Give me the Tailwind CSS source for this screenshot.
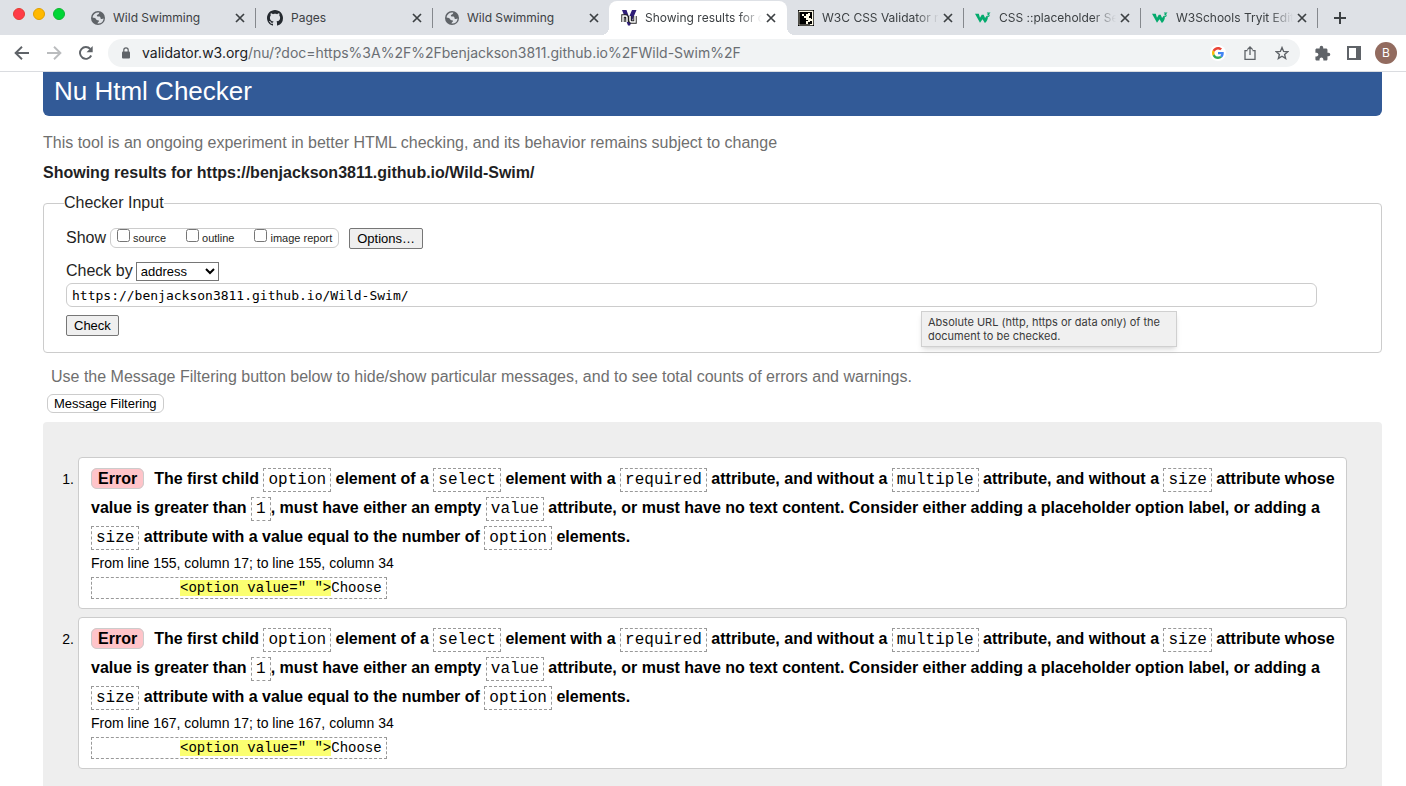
<!DOCTYPE html>
<html lang="en">
<head>
<meta charset="utf-8">
<meta name="viewport" content="width=device-width, initial-scale=1">
<title>Showing results for https://benjackson3811.github.io/Wild-Swim/</title>
<script src="https://cdn.jsdelivr.net/npm/@tailwindcss/browser@4"></script>
</head>
<body class="flex h-screen flex-col overflow-hidden bg-white font-['Liberation_Sans',Arial,sans-serif] text-base text-[#1f1f24]">

<svg class="hidden" aria-hidden="true">
  <symbol id="close" viewBox="0 0 10 10"><path d="M1 1l8 8M9 1L1 9" stroke="#3c4043" stroke-width="1.7" fill="none"/></symbol>
  <symbol id="globe" viewBox="0 0 14 14"><circle cx="7" cy="7" r="7" fill="#5f6368"/><path d="M8.3 1.6c-.4 1-.2 1.5-1.3 1.8-1.2.3-1.3 1-1 1.700.2.6 1.300.5 2 .5 1 0 1.500.6 1.500 1.500 0 .8.6 1 1.300.9.8-.1 1-.5 1.500-.5.300 0 .3.300.2.700A5.600 5.600 0 0 1 6.500 12.500c.1-.9.600-1.300 1.200-1.800.5-.6.2-1.400-.5-1.500-1-.1-1.700-.1-2.100-1C4.600 7.300 4 7 3 6.800c-.7-.1-1.200-.3-1.500-.6A5.600 5.600 0 0 1 8.300 1.600z" fill="#dee1e6"/></symbol>
  <symbol id="w3s" viewBox="0 0 17 12"><path d="M0 1.500h4l1.300 4.200L7.200 2.500h2l1.500 3.400 1.500-2 1.500 1.300c-.1 2.700-1.300 4.600-3.200 6.200L8 7.200 5.300 11z" fill="#04aa6d"/><path d="M12.700.8h2.600L14 2.300c1.300 0 1.500 2-.1 2.100-.7 0-1-.2-1.300-.6" stroke="#04aa6d" stroke-width="1.100" fill="none"/></symbol>
</svg>

<header class="shrink-0 font-[Inter,Roboto,sans-serif]">
  <div class="flex h-[35px] items-stretch bg-[#dee1e6]">
    <div class="flex w-[78px] shrink-0 gap-2 pl-[13px] pt-2">
      <span class="size-3 rounded-full border border-[#e33e32] bg-[#ff3b47]"></span>
      <span class="size-3 rounded-full border border-[#e0a000] bg-[#ffb900]"></span>
      <span class="size-3 rounded-full border border-[#10b531] bg-[#00d636]"></span>
    </div>
    <nav class="flex text-xs text-[#3c4043]" aria-label="Tabs">
      <div class="flex w-[177px] items-center pl-[13px] pr-1.5">
        <svg class="mr-2 size-3.5 shrink-0"><use href="#globe"/></svg>
        <a href="#" class="flex-1 overflow-hidden whitespace-nowrap">Wild Swimming</a>
        <button class="p-1" aria-label="Close tab"><svg class="size-2.5"><use href="#close"/></svg></button>
      </div>
      <div class="flex w-[177px] items-center pr-1.5">
        <span class="mr-[11px] h-5 w-px bg-[#85888d]"></span>
        <svg class="mr-2 size-4 shrink-0" viewBox="0 0 16 16"><path fill="#24292f" d="M8 0C3.580 0 0 3.580 0 8c0 3.540 2.290 6.530 5.470 7.590.4.070.55-.17.55-.38 0-.19-.01-.82-.01-1.490-2.010.37-2.530-.49-2.690-.94-.09-.23-.48-.94-.82-1.130-.28-.15-.68-.52-.01-.53.63-.01 1.080.58 1.230.82.72 1.210 1.870.87 2.330.66.07-.52.28-.87.51-1.070-1.780-.2-3.640-.89-3.640-3.950 0-.87.31-1.590.82-2.150-.08-.2-.36-1.020.08-2.120 0 0 .67-.21 2.200.82.64-.18 1.320-.27 2-.27s1.360.09 2 .27c1.530-1.040 2.200-.82 2.200-.82.44 1.100.16 1.920.08 2.120.51.56.82 1.270.82 2.150 0 3.070-1.870 3.750-3.650 3.950.29.25.54.73.54 1.480 0 1.070-.01 1.930-.01 2.200 0 .21.15.46.55.38A8.010 8.010 0 0 0 16 8c0-4.420-3.580-8-8-8z"/></svg>
        <a href="#" class="flex-1 overflow-hidden whitespace-nowrap">Pages</a>
        <button class="p-1" aria-label="Close tab"><svg class="size-2.5"><use href="#close"/></svg></button>
      </div>
      <div class="flex w-[177px] items-center pr-1.5">
        <span class="mr-3 h-5 w-px bg-[#85888d]"></span>
        <svg class="mr-2 size-3.5 shrink-0"><use href="#globe"/></svg>
        <a href="#" class="flex-1 overflow-hidden whitespace-nowrap">Wild Swimming</a>
        <button class="p-1" aria-label="Close tab"><svg class="size-2.5"><use href="#close"/></svg></button>
      </div>
      <div class="relative mt-px flex w-[178px] items-center rounded-t-lg bg-white pl-3 pr-[7px] before:absolute before:-left-2 before:bottom-0 before:size-2 before:bg-[radial-gradient(circle_at_0_0,transparent_8px,white_8px)] after:absolute after:-right-2 after:bottom-0 after:size-2 after:bg-[radial-gradient(circle_at_100%_0,transparent_8px,white_8px)]" aria-current="page">
        <svg class="mr-2 size-4 shrink-0" viewBox="0 0 16 16"><path d="M1 0h4.500L8 7l3-7h4.500L9 15.500H7z" fill="#2f1d78"/><path d="M2 12V6h2.500c1 0 1.500.5 1.500 1.500V12M9 6v4.500c0 1 .5 1.500 1.500 1.500H14V6" stroke="#222" stroke-width="3.400" fill="none"/><path d="M2 12V6h2.500c1 0 1.500.5 1.500 1.500V12M9 6v4.500c0 1 .5 1.500 1.500 1.500H14V6" stroke="#fff" stroke-width="1.500" fill="none"/></svg>
        <a href="#" class="flex-1 overflow-hidden whitespace-nowrap [mask-image:linear-gradient(to_right,black_80%,transparent)]">Showing results for contents</a>
        <button class="p-1" aria-label="Close tab"><svg class="size-2.5"><use href="#close"/></svg></button>
      </div>
      <div class="flex w-[176px] items-center pl-[11px] pr-1.5">
        <svg class="mr-2 size-4 shrink-0" viewBox="0 0 16 16"><path d="M0 0h16v16H0z" fill="#000"/><path d="M1 1h14v14h-3v-1h2v-3h-2v1h-2v2H8v-3h2v-1H8V8H6V6H4V4h2v2h2V4h2V3h2v3h-1v2h2v1h1V2H1z" fill="#fffbe8"/><path d="M1 1h14v14H1z" fill="none" stroke="#fffbe8" stroke-width=".6"/></svg>
        <a href="#" class="flex-1 overflow-hidden whitespace-nowrap [mask-image:linear-gradient(to_right,black_80%,transparent)]">W3C CSS Validator results</a>
        <button class="p-1" aria-label="Close tab"><svg class="size-2.5"><use href="#close"/></svg></button>
      </div>
      <div class="flex w-[177px] items-center pr-1.5">
        <span class="mr-[11px] h-5 w-px bg-[#85888d]"></span>
        <svg class="mr-2 h-3 w-4 shrink-0"><use href="#w3s"/></svg>
        <a href="#" class="flex-1 overflow-hidden whitespace-nowrap [mask-image:linear-gradient(to_right,black_80%,transparent)]">CSS ::placeholder Selector</a>
        <button class="p-1" aria-label="Close tab"><svg class="size-2.5"><use href="#close"/></svg></button>
      </div>
      <div class="flex w-[177px] items-center pr-1.5">
        <span class="mr-[11px] h-5 w-px bg-[#85888d]"></span>
        <svg class="mr-2 h-3 w-4 shrink-0"><use href="#w3s"/></svg>
        <a href="#" class="flex-1 overflow-hidden whitespace-nowrap [mask-image:linear-gradient(to_right,black_80%,transparent)]">W3Schools Tryit Editor</a>
        <button class="p-1" aria-label="Close tab"><svg class="size-2.5"><use href="#close"/></svg></button>
      </div>
    </nav>
    <div class="flex items-center">
      <span class="h-5 w-px bg-[#85888d]"></span>
      <button class="ml-4" aria-label="New tab"><svg class="size-3" viewBox="0 0 12 12"><path d="M6 0v12M0 6h12" stroke="#3c4043" stroke-width="2"/></svg></button>
    </div>
  </div>

  <div class="flex h-[37px] items-center border-b border-[#dadce0] bg-white pl-3.5 pr-[9px]">
    <button class="mr-[18px]" aria-label="Back"><svg class="h-3.5 w-[15px]" viewBox="0 0 15 14"><path d="M15 7H1.800M8 .8L1.600 7 8 13.200" fill="none" stroke="#5f6368" stroke-width="1.900"/></svg></button>
    <button class="mr-[17px]" aria-label="Forward"><svg class="h-3.5 w-[15px]" viewBox="0 0 15 14"><path d="M0 7h13.200M7 .8L13.400 7 7 13.200" fill="none" stroke="#babcbe" stroke-width="1.900"/></svg></button>
    <button class="mr-[15px]" aria-label="Reload"><svg class="size-3.5" viewBox="0 0 14 14"><path d="M12.200 9.500A5.900 5.900 0 1 1 11.300 3" fill="none" stroke="#5f6368" stroke-width="1.900"/><path d="M13.700 0v6.200H7.500z" fill="#5f6368"/></svg></button>
    <div class="flex h-7 flex-1 items-center rounded-full bg-[#f1f3f4] pl-3.5 pr-[11px]">
      <svg class="mr-3 h-3 w-2" viewBox="0 0 8 12"><rect y="4.500" width="8" height="7" rx="1" fill="#5f6368"/><path d="M1.800 5V3a2.200 2.200 0 0 1 4.400 0v2" fill="none" stroke="#5f6368" stroke-width="1.200"/></svg>
      <div class="flex-1 whitespace-nowrap text-sm text-[#6a6e73]"><span class="text-[#202124]">validator.w3.org</span>/nu/?doc=https%3A%2F%2Fbenjackson3811.github.io%2FWild-Swim%2F</div>
      <button class="mr-[18px] rounded-full bg-white p-0.5" aria-label="Search with Google"><svg class="size-3" viewBox="0 0 48 48"><path fill="#ea4335" d="M24 9.500c3.540 0 6.710 1.220 9.210 3.600l6.850-6.850C35.900 2.380 30.470 0 24 0 14.620 0 6.510 5.380 2.560 13.220l7.980 6.190C12.430 13.720 17.740 9.500 24 9.500z"/><path fill="#4285f4" d="M46.980 24.550c0-1.570-.15-3.090-.38-4.550H24v9.020h12.940c-.58 2.960-2.260 5.480-4.780 7.180l7.730 6c4.510-4.180 7.090-10.360 7.090-17.650z"/><path fill="#fbbc05" d="M10.530 28.590c-.48-1.450-.76-2.990-.76-4.590s.27-3.140.76-4.590l-7.980-6.190C.92 16.460 0 20.120 0 24s.92 7.540 2.560 10.780l7.970-6.190z"/><path fill="#34a853" d="M24 48c6.480 0 11.930-2.130 15.890-5.810l-7.730-6c-2.150 1.450-4.920 2.300-8.160 2.300-6.260 0-11.570-4.220-13.470-9.910l-7.980 6.190C6.510 42.620 14.620 48 24 48z"/></svg></button>
      <button class="mr-[19px]" aria-label="Share"><svg class="h-3.5 w-3" viewBox="0 0 12 14"><path d="M3.500 4.700H1v8.600h10V4.700H8.500M6 9V1M3.300 3.600L6 .9l2.700 2.700" fill="none" stroke="#5f6368" stroke-width="1.300"/></svg></button>
      <button aria-label="Bookmark this page"><svg class="size-3.5" viewBox="0 0 14 14"><path d="M7 1.600l1.600 3.800 4.100.3-3.100 2.700 1 4L7 10.200l-3.600 2.200 1-4L1.300 5.700l4.100-.3z" fill="none" stroke="#5f6368" stroke-width="1.400"/></svg></button>
    </div>
    <button class="ml-3.5" aria-label="Extensions"><svg class="size-[17px]" viewBox="0 0 24 24"><path fill="#5f6368" d="M20.500 11H19V7c0-1.100-.9-2-2-2h-4V3.500a2.500 2.500 0 0 0-5 0V5H4c-1.100 0-2 .9-2 2v3.800h1.500c1.500 0 2.700 1.200 2.700 2.700S5 16.200 3.500 16.200H2V20c0 1.100.9 2 2 2h3.800v-1.500c0-1.500 1.200-2.700 2.700-2.700s2.700 1.200 2.700 2.700V22H17c1.100 0 2-.9 2-2v-4h1.500a2.500 2.500 0 0 0 0-5z"/></svg></button>
    <button class="ml-4" aria-label="Side panel"><svg class="size-3.5" viewBox="0 0 14 14"><path d="M1 1h12v12H1z" fill="none" stroke="#5f6368" stroke-width="2"/><path d="M9 1h4v12H9z" fill="#5f6368"/></svg></button>
    <button class="ml-3.5 size-[22px] rounded-full bg-[#926b5f] text-xs text-white" aria-label="Profile">B</button>
  </div>
</header>

<main class="min-h-0 flex-1 overflow-hidden pl-[43px] pr-6">
  <h1 class="rounded-b-md bg-[#325a97] pb-1.5 pl-[11px] text-[26px] leading-[38px] text-white">Nu Html Checker</h1>
  <p class="mt-[15px] leading-6 text-[#6f6f6f]">This tool is an ongoing experiment in better HTML checking, and its behavior remains subject to change</p>
  <h2 class="mt-1.5 font-bold leading-6">Showing results for https://benjackson3811.github.io/Wild-Swim/</h2>

  <form class="relative mt-1.5" onsubmit="return false">
    <fieldset class="rounded border border-[#ccc] pb-4 pl-[22px] pr-16">
      <legend class="-ml-0.5 leading-6">Checker Input</legend>
      <div class="mt-[11px] flex items-center">
        <span>Show</span>
        <div class="ml-1 flex h-5 items-start gap-5 rounded-md border border-[#ccc] px-1.5 text-[11px] leading-[19px]">
          <label class="flex items-start gap-[3px]"><input type="checkbox" class="size-[13px]">source</label>
          <label class="flex items-start gap-[3px]"><input type="checkbox" class="size-[13px]">outline</label>
          <label class="flex items-start gap-[3px]"><input type="checkbox" class="size-[13px]">image report</label>
        </div>
        <button type="button" class="ml-2.5 h-[21px] rounded-xs border border-[#767676] bg-[#efefef] px-[7px] text-[13px] leading-[19px] text-black">Options…</button>
      </div>
      <div class="mt-[9px] flex items-center">
        <label for="docselect">Check by</label>
        <select id="docselect" class="ml-[3px] h-[19px] w-[83px] border border-[#767676] bg-white text-[13px] leading-[17px] text-black"><option>address</option></select>
      </div>
      <input type="url" aria-label="Address of the document" value="https://benjackson3811.github.io/Wild-Swim/" class="block h-6 w-full rounded-md border border-[#ccc] px-[5px] font-['DejaVu_Sans_Mono',monospace] text-[13px] text-black">
      <button type="submit" class="mt-2 block h-[21px] rounded-xs border border-[#767676] bg-[#efefef] px-[7px] text-[13px] leading-[19px] text-black">Check</button>
    </fieldset>
    <div role="tooltip" class="absolute right-[205px] top-[120px] w-64 border border-[#d0d0d0] bg-[#f0f0f0] px-1.5 py-[3px] font-[Inter,sans-serif] text-[11px] leading-3.5 text-[#3a3a3a] shadow-md">Absolute URL (http, https or data only) of the document to be checked.</div>
  </form>

  <p class="mt-3 pl-2 leading-6 text-[#6f6f6f]">Use the Message Filtering button below to hide/show particular messages, and to see total counts of errors and warnings.</p>
  <button type="button" class="ml-1 mt-[5px] block h-[19px] rounded-md border border-[#ccc] bg-white px-1.5 text-[13px] leading-[17px] text-black">Message Filtering</button>

  <section class="mt-[9px] rounded-t bg-[#eee] px-[35px] pb-10 pt-[35px]">
    <ol class="flex list-none flex-col gap-2 text-black">
      <li class="flex">
        <span class="-ml-5 w-5 shrink-0 pr-1 pt-2 text-right text-sm leading-7">1.</span>
        <article class="min-w-0 flex-1 rounded border border-[#ccc] bg-white pb-[7px] pl-3 pr-2 pt-1.5">
          <p class="font-bold leading-[29px]"><strong class="mr-2.5 rounded-md border border-[#ccc] bg-[#ffc4c9] px-1.5 py-px">Error</strong>The first child <code class="border border-dashed border-[#999] px-1 py-0.5 font-['Liberation_Mono',monospace] text-base font-normal leading-none">option</code> element of a <code class="border border-dashed border-[#999] px-1 py-0.5 font-['Liberation_Mono',monospace] text-base font-normal leading-none">select</code> element with a <code class="border border-dashed border-[#999] px-1 py-0.5 font-['Liberation_Mono',monospace] text-base font-normal leading-none">required</code> attribute, and without a <code class="border border-dashed border-[#999] px-1 py-0.5 font-['Liberation_Mono',monospace] text-base font-normal leading-none">multiple</code> attribute, and without a <code class="border border-dashed border-[#999] px-1 py-0.5 font-['Liberation_Mono',monospace] text-base font-normal leading-none">size</code> attribute whose value is greater than <code class="border border-dashed border-[#999] px-1 py-0.5 font-['Liberation_Mono',monospace] text-base font-normal leading-none">1</code>, must have either an empty <code class="border border-dashed border-[#999] px-1 py-0.5 font-['Liberation_Mono',monospace] text-base font-normal leading-none">value</code> attribute, or must have no text content. Consider either adding a placeholder option label, or adding a <code class="border border-dashed border-[#999] px-1 py-0.5 font-['Liberation_Mono',monospace] text-base font-normal leading-none">size</code> attribute with a value equal to the number of <code class="border border-dashed border-[#999] px-1 py-0.5 font-['Liberation_Mono',monospace] text-base font-normal leading-none">option</code> elements.</p>
          <p class="text-sm leading-6">From line 155, column 17; to line 155, column 34</p>
          <p class="flex py-0.5"><code class="whitespace-pre border border-dashed border-[#999] px-1 font-['Liberation_Mono',monospace] text-sm leading-5">          <mark class="bg-[#fbff71] text-black">&lt;option value=" "&gt;</mark>Choose</code></p>
        </article>
      </li>
      <li class="flex">
        <span class="-ml-5 w-5 shrink-0 pr-1 pt-2 text-right text-sm leading-7">2.</span>
        <article class="min-w-0 flex-1 rounded border border-[#ccc] bg-white pb-[7px] pl-3 pr-2 pt-1.5">
          <p class="font-bold leading-[29px]"><strong class="mr-2.5 rounded-md border border-[#ccc] bg-[#ffc4c9] px-1.5 py-px">Error</strong>The first child <code class="border border-dashed border-[#999] px-1 py-0.5 font-['Liberation_Mono',monospace] text-base font-normal leading-none">option</code> element of a <code class="border border-dashed border-[#999] px-1 py-0.5 font-['Liberation_Mono',monospace] text-base font-normal leading-none">select</code> element with a <code class="border border-dashed border-[#999] px-1 py-0.5 font-['Liberation_Mono',monospace] text-base font-normal leading-none">required</code> attribute, and without a <code class="border border-dashed border-[#999] px-1 py-0.5 font-['Liberation_Mono',monospace] text-base font-normal leading-none">multiple</code> attribute, and without a <code class="border border-dashed border-[#999] px-1 py-0.5 font-['Liberation_Mono',monospace] text-base font-normal leading-none">size</code> attribute whose value is greater than <code class="border border-dashed border-[#999] px-1 py-0.5 font-['Liberation_Mono',monospace] text-base font-normal leading-none">1</code>, must have either an empty <code class="border border-dashed border-[#999] px-1 py-0.5 font-['Liberation_Mono',monospace] text-base font-normal leading-none">value</code> attribute, or must have no text content. Consider either adding a placeholder option label, or adding a <code class="border border-dashed border-[#999] px-1 py-0.5 font-['Liberation_Mono',monospace] text-base font-normal leading-none">size</code> attribute with a value equal to the number of <code class="border border-dashed border-[#999] px-1 py-0.5 font-['Liberation_Mono',monospace] text-base font-normal leading-none">option</code> elements.</p>
          <p class="text-sm leading-6">From line 167, column 17; to line 167, column 34</p>
          <p class="flex py-0.5"><code class="whitespace-pre border border-dashed border-[#999] px-1 font-['Liberation_Mono',monospace] text-sm leading-5">          <mark class="bg-[#fbff71] text-black">&lt;option value=" "&gt;</mark>Choose</code></p>
        </article>
      </li>
    </ol>
  </section>
</main>
</body>
</html>
